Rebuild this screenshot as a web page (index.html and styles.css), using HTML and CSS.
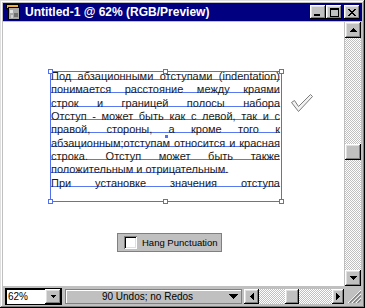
FILE: index.html
```html
<!DOCTYPE html>
<html lang="ru">
<head>
    <meta charset="UTF-8">
    <meta name="viewport" content="width=device-width, initial-scale=1.0">
    <title>Untitled-1 @ 62% (RGB/Preview)</title>
    <link rel="stylesheet" href="styles.css">
</head>
<body>
    <div class="window">
        <div class="titlebar">
            <svg class="doc-icon" width="16" height="16" viewBox="0 0 16 16">
                <rect x="1.5" y="0.5" width="12" height="4" fill="#f0b040" stroke="#000"/>
                <rect x="3.5" y="3.5" width="11" height="12" fill="#a8a8a8" stroke="#000"/>
                <rect x="5" y="6" width="3" height="3" fill="#e0e0e0"/>
                <rect x="9" y="9" width="4" height="4" fill="#707070"/>
                <rect x="6" y="11" width="2" height="3" fill="#d0d0d0"/>
            </svg>
            <span class="title">Untitled-1 @ 62% (RGB/Preview)</span>
            <div class="caption-buttons">
                <span class="cap-btn">
                    <svg width="8" height="7" viewBox="0 0 8 7"><rect x="0" y="5" width="6" height="2" fill="#000"/></svg>
                </span>
                <span class="cap-btn">
                    <svg width="9" height="9" viewBox="0 0 9 9" shape-rendering="crispEdges">
                        <rect x="0.5" y="0.5" width="8" height="8" fill="none" stroke="#000"/>
                        <rect x="0" y="1" width="9" height="1" fill="#000"/>
                    </svg>
                </span>
                <span class="cap-btn close">
                    <svg width="8" height="7" viewBox="0 0 8 7" shape-rendering="crispEdges">
                        <path d="M0 0h2v1H0zM6 0h2v1H6zM1 1h2v1H1zM5 1h2v1H5zM2 2h4v1H2zM3 3h2v1H3zM2 4h4v1H2zM1 5h2v1H1zM5 5h2v1H5zM0 6h2v1H0zM6 6h2v1H6z" fill="#000"/>
                    </svg>
                </span>
            </div>
        </div>

        <div class="client">
            <div class="canvas">
                <div class="art-row">
                    <div class="text-frame">
                        <div class="text-lines">
                            <div class="line">Под абзационными отступами (indentation)</div>
                            <div class="line">понимается расстояние между краями</div>
                            <div class="line">строк и границей полосы набора</div>
                            <div class="line">Отступ - может быть как с левой, так и с</div>
                            <div class="line">правой, стороны, а кроме того к</div>
                            <div class="line">абзационным;отступам относится и красная</div>
                            <div class="line">строка. Отступ может быть также</div>
                            <div class="line last">положительным и отрицательным.</div>
                            <div class="line">При установке значения отступа</div>
                        </div>
                        <span class="handle tl"></span>
                        <span class="handle tc"></span>
                        <span class="handle tr"></span>
                        <span class="handle bl"></span>
                        <span class="handle bc"></span>
                        <span class="handle br"></span>
                        <span class="center-mark"></span>
                    </div>
                    <svg class="apply-check" width="22" height="20" viewBox="0 0 22 20">
                        <polygon points="0.5,9.5 3.5,7.5 7.5,13.5 19.5,1.5 21.5,3.5 7.5,18.5" fill="#f2f2f2" stroke="#7c7c7c"/>
                    </svg>
                </div>
                <label class="hang-box">
                    <span class="checkbox"></span>
                    <span class="hang-label">Hang Punctuation</span>
                </label>
            </div>

            <div class="vscroll">
                <span class="sb-btn">
                    <svg width="7" height="4" viewBox="0 0 7 4" shape-rendering="crispEdges"><path d="M3 0h1v1H3zM2 1h3v1H2zM1 2h5v1H1zM0 3h7v1H0z" fill="#000"/></svg>
                </span>
                <span class="sb-track vertical">
                    <span class="sb-thumb"></span>
                </span>
                <span class="sb-btn">
                    <svg width="7" height="4" viewBox="0 0 7 4" shape-rendering="crispEdges"><path d="M0 0h7v1H0zM1 1h5v1H1zM2 2h3v1H2zM3 3h1v1H3z" fill="#000"/></svg>
                </span>
            </div>

            <div class="statusbar">
                <div class="zoom-field">
                    <span class="zoom-value">62%</span>
                    <span class="combo-btn">
                        <svg width="5" height="3" viewBox="0 0 5 3" shape-rendering="crispEdges"><path d="M0 0h5v1H0zM1 1h3v1H1zM2 2h1v1H2z" fill="#000"/></svg>
                    </span>
                </div>
                <div class="status-panel">
                    <span class="status-text">90 Undos; no Redos</span>
                    <svg class="status-arrow" width="9" height="5" viewBox="0 0 9 5" shape-rendering="crispEdges"><path d="M0 0h9v1H0zM1 1h7v1H1zM2 2h5v1H2zM3 3h3v1H3zM4 4h1v1H4z" fill="#000"/></svg>
                </div>
                <div class="hscroll">
                    <span class="sb-btn small">
                        <svg width="4" height="7" viewBox="0 0 4 7" shape-rendering="crispEdges"><path d="M3 0h1v7H3zM2 1h1v5H2zM1 2h1v3H1zM0 3h1v1H0z" fill="#000"/></svg>
                    </span>
                    <span class="sb-track horizontal">
                        <span class="sb-thumb"></span>
                    </span>
                    <span class="sb-btn small narrow">
                        <svg width="4" height="7" viewBox="0 0 4 7" shape-rendering="crispEdges"><path d="M0 0h1v7H0zM1 1h1v5H1zM2 2h1v3H2zM3 3h1v1H3z" fill="#000"/></svg>
                    </span>
                </div>
            </div>

            <div class="size-grip">
                <svg width="16" height="16" viewBox="0 0 16 16">
                    <path d="M16 3L3 16M16 7L7 16M16 11L11 16" stroke="#fff" stroke-width="1"/>
                    <path d="M16 4.5L4.5 16M16 8.5L8.5 16M16 12.5L12.5 16" stroke="#808080" stroke-width="1.4"/>
                </svg>
            </div>
        </div>
    </div>
</body>
</html>
```

FILE: styles.css
```css
body {
    margin: 0;
    font-family: "Liberation Sans", Arial, sans-serif;
    background-color: #fff;
}

.window {
    width: 365px;
    height: 308px;
    box-sizing: border-box;
    padding: 3px;
    display: flex;
    flex-direction: column;
    background-color: #c0c0c0;
    box-shadow: inset -1px -1px #000, inset 1px 1px #dfdfdf,
                inset -2px -2px #808080, inset 2px 2px #fff;
}

/* Title bar */
.titlebar {
    flex: none;
    height: 18px;
    display: flex;
    align-items: center;
    padding: 0 2px;
    margin-bottom: 1px;
    background-color: #000080;
    color: #fff;
}

.doc-icon {
    margin-right: 4px;
}

.title {
    font-size: 12px;
    font-weight: bold;
    white-space: nowrap;
}

.caption-buttons {
    margin-left: auto;
    display: flex;
}

.cap-btn,
.sb-btn,
.sb-thumb,
.combo-btn {
    box-sizing: border-box;
    display: flex;
    align-items: center;
    justify-content: center;
    background-color: #c0c0c0;
    box-shadow: inset -1px -1px #000, inset 1px 1px #fff,
                inset -2px -2px #808080, inset 2px 2px #dfdfdf;
}

.cap-btn {
    width: 16px;
    height: 14px;
}

.cap-btn.close {
    margin-left: 2px;
}

/* Client area */
.client {
    flex: 1;
    min-height: 0;
    display: grid;
    grid-template-columns: 1fr 18px;
    grid-template-rows: 1fr 19px;
}

.canvas {
    background-color: #fff;
    padding: 49px 0 0 47px;
    overflow: hidden;
}

.art-row {
    display: flex;
    align-items: flex-start;
}

.text-frame {
    position: relative;
    width: 232px;
    height: 131px;
    box-sizing: border-box;
    border: 1px solid #5070f0;
    padding-right: 1px;
}

.text-lines {
    margin-top: -2px;
    font-size: 11px;
    line-height: 13.33px;
    color: #1a1a1a;
}

.line {
    text-align: justify;
    text-align-last: justify;
    text-decoration: underline;
    text-decoration-color: #5a78f0;
    text-decoration-thickness: 1px;
    text-decoration-skip-ink: none;
    text-underline-offset: -1px;
}

.line.last {
    text-align-last: left;
}

.handle {
    position: absolute;
    width: 5px;
    height: 5px;
    box-sizing: border-box;
    border: 1px solid #5070f0;
    background-color: #fff;
}

.handle.tl { left: -3px; top: -3px; }
.handle.tc { left: 112px; top: -3px; }
.handle.tr { right: -3px; top: -3px; }
.handle.bl { left: -3px; bottom: -3px; }
.handle.bc { left: 112px; bottom: -3px; }
.handle.br { right: -3px; bottom: -3px; }

.center-mark {
    position: absolute;
    left: 114px;
    top: 63px;
    width: 3px;
    height: 3px;
    background-color: #5070f0;
}

.apply-check {
    margin: 22px 0 0 9px;
}

.hang-box {
    width: 105px;
    height: 19px;
    box-sizing: border-box;
    margin: 31px 0 0 67px;
    padding-left: 6px;
    display: flex;
    align-items: center;
    border: 1px solid #808080;
    background-color: #c0c0c0;
    font-size: 9.5px;
    color: #000;
}

.hang-label {
    white-space: nowrap;
}

.checkbox {
    flex: none;
    width: 13px;
    height: 13px;
    margin-right: 5px;
    box-sizing: border-box;
    background-color: #fff;
    box-shadow: inset 1px 1px #808080, inset -1px -1px #fff,
                inset 2px 2px #000, inset -2px -2px #dfdfdf;
}

/* Scrollbars */
.vscroll {
    padding: 0 1px;
    display: flex;
    flex-direction: column;
}

.sb-btn {
    flex: none;
    width: 16px;
    height: 16px;
}

.sb-track {
    flex: 1;
    display: flex;
    background: repeating-conic-gradient(#c0c0c0 0 25%, #fff 0 50%) 0 0 / 2px 2px;
}

.sb-track.vertical {
    flex-direction: column;
}

.sb-track.vertical .sb-thumb {
    width: 16px;
    height: 16px;
    margin-top: 106px;
}

/* Bottom bar */
.statusbar {
    display: flex;
    align-items: flex-start;
    padding: 2px 0 0 2px;
    font-size: 10px;
}

.zoom-field {
    width: 57px;
    height: 17px;
    box-sizing: border-box;
    display: flex;
    align-items: center;
    border: 1px solid #000;
    background-color: #fff;
    box-shadow: inset 1px 1px #000;
}

.zoom-value {
    flex: 1;
    padding-left: 2px;
}

.combo-btn {
    width: 16px;
    height: 15px;
}

.status-panel {
    width: 177px;
    height: 15px;
    box-sizing: border-box;
    margin: 1px 0 0 3px;
    padding-right: 3px;
    display: flex;
    align-items: center;
    border: 1px solid #808080;
    box-shadow: inset 1px 1px #fff;
}

.status-text {
    flex: 1;
    text-align: center;
}

.hscroll {
    flex: 1;
    height: 15px;
    margin: 1px 0 0 2px;
    display: flex;
}

.sb-btn.small {
    width: 15px;
    height: 15px;
}

.sb-btn.narrow {
    width: 12px;
}

.sb-track.horizontal .sb-thumb {
    width: 14px;
    height: 15px;
    margin-left: 26px;
}

.size-grip {
    padding: 1px 0 0 1px;
}
```
